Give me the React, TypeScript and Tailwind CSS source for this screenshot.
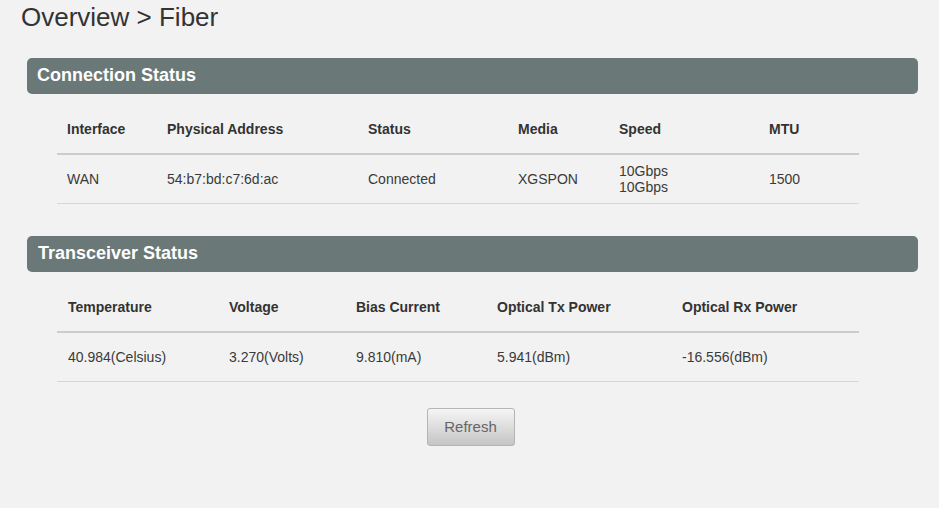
import React from "react";

const font = { fontFamily: '"Liberation Sans", Arial, sans-serif' };

function Bar({ title, pl }: { title: string; pl: string }) {
  return (
    <div className={`h-[36px] rounded-[5px] bg-[#6b7878] flex items-center pb-[2px] ${pl} text-[18px] font-bold text-white`}>
      {title}
    </div>
  );
}

export default function App() {
  const t1Cols = "grid grid-cols-[100px_201px_150px_101px_150px_100px]";
  const t2Cols = "grid grid-cols-[161px_127px_141px_185px_188px]";
  return (
    <div className="w-[939px] h-[508px] bg-[#f2f2f2] text-[#333] overflow-hidden" style={font}>
      <div className="pt-[2px] pl-[21px] h-[58px] text-[26px] leading-[30px] text-[#333]">Overview &gt; Fiber</div>
      <div className="ml-[27px] w-[891px]">
        <Bar title="Connection Status" pl="pl-[10px]" />
        <div className="ml-[30px] w-[802px] mt-[11px] text-[14px]">
          <div className={`${t1Cols} h-[50px] items-center font-bold border-b-2 border-[#cccccc]`}>
            <div className="px-[10px]">Interface</div>
            <div className="px-[10px]">Physical Address</div>
            <div className="px-[10px]">Status</div>
            <div className="px-[10px]">Media</div>
            <div className="px-[10px]">Speed</div>
            <div className="px-[10px]">MTU</div>
          </div>
          <div className={`${t1Cols} h-[49px] items-center border-b border-[#d6d6d6] text-[#3a3a3a]`}>
            <div className="px-[10px]">WAN</div>
            <div className="px-[10px]">54:b7:bd:c7:6d:ac</div>
            <div className="px-[10px]">Connected</div>
            <div className="px-[10px]">XGSPON</div>
            <div className="px-[10px] leading-[16px]">
              <div>10Gbps</div>
              <div>10Gbps</div>
            </div>
            <div className="px-[10px]">1500</div>
          </div>
        </div>

        <div className="mt-[32px]">
          <Bar title="Transceiver Status" pl="pl-[11px]" />
        </div>
        <div className="ml-[30px] w-[802px] mt-[11px] text-[14px]">
          <div className={`${t2Cols} h-[50px] items-center font-bold border-b-2 border-[#cccccc]`}>
            <div className="px-[11px]">Temperature</div>
            <div className="px-[11px]">Voltage</div>
            <div className="px-[11px]">Bias Current</div>
            <div className="px-[11px]">Optical Tx Power</div>
            <div className="px-[11px]">Optical Rx Power</div>
          </div>
          <div className={`${t2Cols} h-[49px] items-center border-b border-[#d6d6d6] text-[#3a3a3a]`}>
            <div className="px-[11px]">40.984(Celsius)</div>
            <div className="px-[11px]">3.270(Volts)</div>
            <div className="px-[11px]">9.810(mA)</div>
            <div className="px-[11px]">5.941(dBm)</div>
            <div className="px-[11px]">-16.556(dBm)</div>
          </div>
        </div>

        <div className="mt-[26px] flex justify-center pr-[4px]">
          <button className="w-[88px] h-[38px] rounded-[3px] border border-[#b4b4b4] bg-gradient-to-b from-[#f5f5f5] to-[#c5c5c5] text-[15px] text-[#666]">
            Refresh
          </button>
        </div>
      </div>
    </div>
  );
}
